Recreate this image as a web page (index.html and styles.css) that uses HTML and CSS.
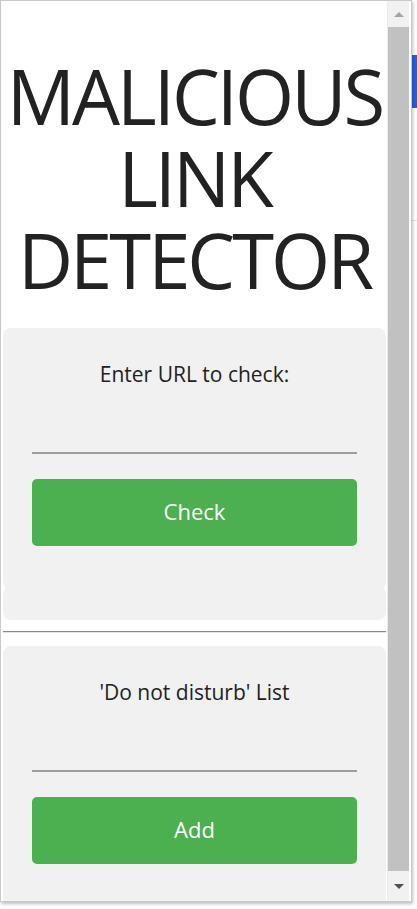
FILE: index.html
```html
<!DOCTYPE html>
<html>
<head>
<meta charset="utf-8">
<link rel="stylesheet" href="styles.css">
</head>
<body>
<div class="page">
  <div class="page-bar"></div>
  <div class="page-rule"></div>
</div>
<div class="popup">
  <div class="content">
    <h1 class="title">MALICIOUS LINK DETECTOR</h1>
    <section class="card">
      <div class="card-main">
        <p class="label">Enter URL to check:</p>
        <input class="field" type="text">
        <button class="btn">Check</button>
      </div>
      <div class="card-tail"></div>
    </section>
    <hr class="divider">
    <section class="card">
      <div class="card-main">
        <p class="label">'Do not disturb' List</p>
        <input class="field" type="text">
        <button class="btn">Add</button>
      </div>
    </section>
  </div>
  <div class="scrollbar">
    <div class="sb-btn"><span class="arrow-up"></span></div>
    <div class="sb-thumb"></div>
    <div class="sb-btn sb-btn-down"><span class="arrow-down"></span></div>
  </div>
</div>
</body>
</html>
```
FILE: styles.css
```css
html, body {
  margin: 0;
  padding: 0;
  background: #ffffff;
  width: 417px;
  height: 909px;
  overflow: hidden;
}

.page {
  position: relative;
  width: 417px;
  height: 909px;
}

.page-bar {
  position: absolute;
  left: 0;
  top: 55px;
  width: 417px;
  height: 53px;
  background: #2b5fd1;
}

.page-rule {
  position: absolute;
  left: 0;
  top: 220px;
  width: 417px;
  height: 1px;
  background: #e2e2e2;
}

.popup {
  position: absolute;
  left: 0;
  top: 0;
  width: 410px;
  height: 900px;
  background: #ffffff;
  border: 1px solid #c9c9c9;
  box-shadow: 1px 2px 3px rgba(0, 0, 0, 0.25);
  display: flex;
  overflow: hidden;
  font-family: "Open Sans", "Noto Sans", sans-serif;
  color: #222222;
}

.content {
  flex: 1;
  padding: 0 1px 0 2px;
  min-width: 0;
}

.title {
  margin: 54px 0 27px;
  font-size: 76px;
  line-height: 82px;
  font-weight: 400;
  text-align: center;
  letter-spacing: -3px;
  color: #222222;
}

.card {
  display: flex;
  flex-direction: column;
}

.card-main {
  background: #f1f1f1;
  border-radius: 8px;
  padding: 33px 29px 44px;
  display: flex;
  flex-direction: column;
}

.card-tail {
  background: #f1f1f1;
  border-radius: 8px;
  height: 34px;
  margin-top: -4px;
}

.label {
  margin: 0;
  font-size: 21px;
  line-height: 27px;
  text-align: center;
}

.field {
  margin: 28px 0 0;
  height: 38px;
  box-sizing: border-box;
  border: none;
  border-bottom: 2px solid #9c9c9c;
  background: transparent;
  outline: none;
  font-family: inherit;
  font-size: 18px;
}

.btn {
  margin-top: 25px;
  height: 67px;
  padding: 0 0 4px;
  border: none;
  border-radius: 5px;
  background: #4caf50;
  color: #ffffff;
  font-family: inherit;
  font-size: 22px;
}

.divider {
  margin: 11px 0 13px;
  border: none;
  border-top: 1px solid #8a8a8a;
  border-bottom: 1px solid #e6e6e6;
  height: 0;
}

.scrollbar {
  width: 21px;
  background: #f1f1f1;
  display: flex;
  flex-direction: column;
  margin-right: 2px;
  border-left: 1px solid #ececec;
}

.sb-btn {
  height: 26px;
  display: flex;
  align-items: center;
  justify-content: center;
}

.sb-btn-down {
  height: 30px;
}

.sb-thumb {
  flex: 1;
  background: #c1c1c1;
}

.arrow-up {
  width: 0;
  height: 0;
  border-left: 5px solid transparent;
  border-right: 5px solid transparent;
  border-bottom: 5px solid #a3a3a3;
}

.arrow-down {
  width: 0;
  height: 0;
  border-left: 5px solid transparent;
  border-right: 5px solid transparent;
  border-top: 5px solid #505050;
}
```
